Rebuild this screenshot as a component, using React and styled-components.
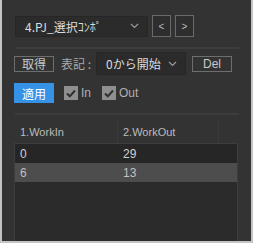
import React from 'react';
import styled, { createGlobalStyle } from 'styled-components';

const Global = createGlobalStyle`
  html, body { margin: 0; padding: 0; background: #c4c4c4; }
  body { font-family: "Liberation Sans", "Noto Sans CJK JP", sans-serif; font-size: 12px; }
`;

const rows = [
  { a: '0', b: '29' },
  { a: '6', b: '13', sel: true },
];

export default function App() {
  return (
    <>
      <Global />
      <Frame>
        <Panel>
          <Top>
            <Combo width={133}>
              <span>4.PJ_選択ｺﾝﾎﾟ</span>
              <Chevron />
            </Combo>
            <ArrowBtn>&lt;</ArrowBtn>
            <ArrowBtn>&gt;</ArrowBtn>
          </Top>
          <Rule />
          <Row>
            <Btn>取得</Btn>
            <Label>表記 :</Label>
            <Combo width={90} tall>
              <span>0から開始</span>
              <Chevron />
            </Combo>
            <Btn wide>Del</Btn>
          </Row>
          <Row2>
            <BlueBtn>適用</BlueBtn>
            <Check><Box><Tick /></Box>In</Check>
            <Check><Box><Tick /></Box>Out</Check>
          </Row2>
          <Rule />
          <Table>
            <Head>
              <HCell>1.WorkIn</HCell>
              <HCell>2.WorkOut</HCell>
              <HCell />
            </Head>
            <Body>
              {rows.map((r, i) => (
                <TRow key={i} sel={r.sel}>
                  <Cell>{r.a}</Cell>
                  <Cell>{r.b}</Cell>
                </TRow>
              ))}
            </Body>
          </Table>
        </Panel>
      </Frame>
    </>
  );
}

function Chevron() {
  return (
    <svg width="9" height="6" viewBox="0 0 9 6" style={{ flex: 'none' }}>
      <path d="M1 1 L4.5 4.5 L8 1" fill="none" stroke="#9a9a9a" strokeWidth="1.2" />
    </svg>
  );
}

function Tick() {
  return (
    <svg width="10" height="9" viewBox="0 0 10 9">
      <path d="M1 4.5 L3.8 7.3 L9 1.5" fill="none" stroke="#2e2e2e" strokeWidth="2" />
    </svg>
  );
}

const Frame = styled.div`
  width: 253px;
  height: 243px;
  padding: 0 2px 2px 2px;
  box-sizing: border-box;
`;
const Panel = styled.div`
  height: 100%;
  background: #333333;
  display: flex;
  flex-direction: column;
  padding: 15px 0 0 12px;
  box-sizing: border-box;
  color: #d2d2d2;
`;
const Top = styled.div`
  display: flex;
  align-items: center;
  gap: 4px;
  height: 22px;
  padding-left: 1px;
`;
const Combo = styled.div`
  width: ${p => p.width}px;
  height: ${p => (p.tall ? 23 : 21)}px;
  box-sizing: border-box;
  background: #2b2b2b;
  border: 1px solid #262626;
  display: flex;
  align-items: center;
  justify-content: space-between;
  padding: 0 8px 0 9px;
  color: #dcdcdc;
  font-family: "Noto Sans CJK JP", sans-serif;
  font-size: 12px;
  white-space: nowrap;
`;
const ArrowBtn = styled.div`
  width: 19px;
  height: 22px;
  box-sizing: border-box;
  border: 1px solid #6a6a6a;
  background: #2e2e2e;
  color: #bdbdbd;
  font-size: 10px;
  display: flex;
  align-items: center;
  justify-content: center;
`;
const Rule = styled.div`
  height: 2px;
  background: #3d3d3d;
  margin: 10px 12px 0 1px;
`;
const Row = styled.div`
  display: flex;
  align-items: center;
  margin-top: 3px;
  height: 23px;
`;
const Btn = styled.div`
  width: 40px;
  height: 16px;
  box-sizing: border-box;
  border: 1px solid #6e6e6e;
  color: #c8c8c8;
  display: flex;
  align-items: center;
  justify-content: center;
  margin-left: ${p => (p.wide ? 6 : 0)}px;
  font-family: ${p => (p.wide ? '"Liberation Sans", sans-serif' : '"Noto Sans CJK JP", sans-serif')};
  font-size: 12px;
`;
const Label = styled.div`
  color: #a8a8a8;
  margin: 0 6px 0 7px;
  width: 29px;
  font-family: "Noto Sans CJK JP", sans-serif;
  font-size: 12px;
  white-space: nowrap;
`;
const Row2 = styled.div`
  display: flex;
  align-items: center;
  margin-top: 8px;
  height: 20px;
`;
const BlueBtn = styled.div`
  width: 40px;
  height: 20px;
  background: #3592e6;
  color: #ffffff;
  display: flex;
  align-items: center;
  justify-content: center;
  font-family: "Noto Sans CJK JP", sans-serif;
  font-size: 12px;
  margin-right: 10px;
`;
const Check = styled.div`
  display: flex;
  align-items: center;
  gap: 3px;
  color: #b0b0b0;
  font-size: 12px;
  margin-right: 11px;
`;
const Box = styled.div`
  width: 14px;
  height: 14px;
  background: #8f8f8f;
  display: flex;
  align-items: center;
  justify-content: center;
`;
const Table = styled.div`
  flex: 1;
  display: flex;
  flex-direction: column;
  margin-top: 6px;
  font-size: 11px;
`;
const Head = styled.div`
  display: grid;
  grid-template-columns: 103px 101px 1fr;
  height: 22px;
  margin-left: 1px;
`;
const HCell = styled.div`
  display: flex;
  align-items: center;
  padding-left: 5px;
  color: #bcbcbc;
  border-right: 1px solid #3b3b3b;
  &:last-child { border-right: none; }
`;
const Body = styled.div`
  flex: 1;
  background: #2b2b2b;
  width: 222px;
  border-left: 1px solid #3d3d3d;
  border-right: 1px solid #3d3d3d;
  border-top: 1px solid #3d3d3d;
`;
const TRow = styled.div`
  display: grid;
  grid-template-columns: 103px 1fr;
  height: 19px;
  background: ${p => (p.sel ? '#4d4d4d' : '#262626')};
  color: ${p => (p.sel ? '#c0c0c0' : '#d0d0d0')};
  font-size: 12px;
`;
const Cell = styled.div`
  display: flex;
  align-items: center;
  padding-left: 5px;
`;
